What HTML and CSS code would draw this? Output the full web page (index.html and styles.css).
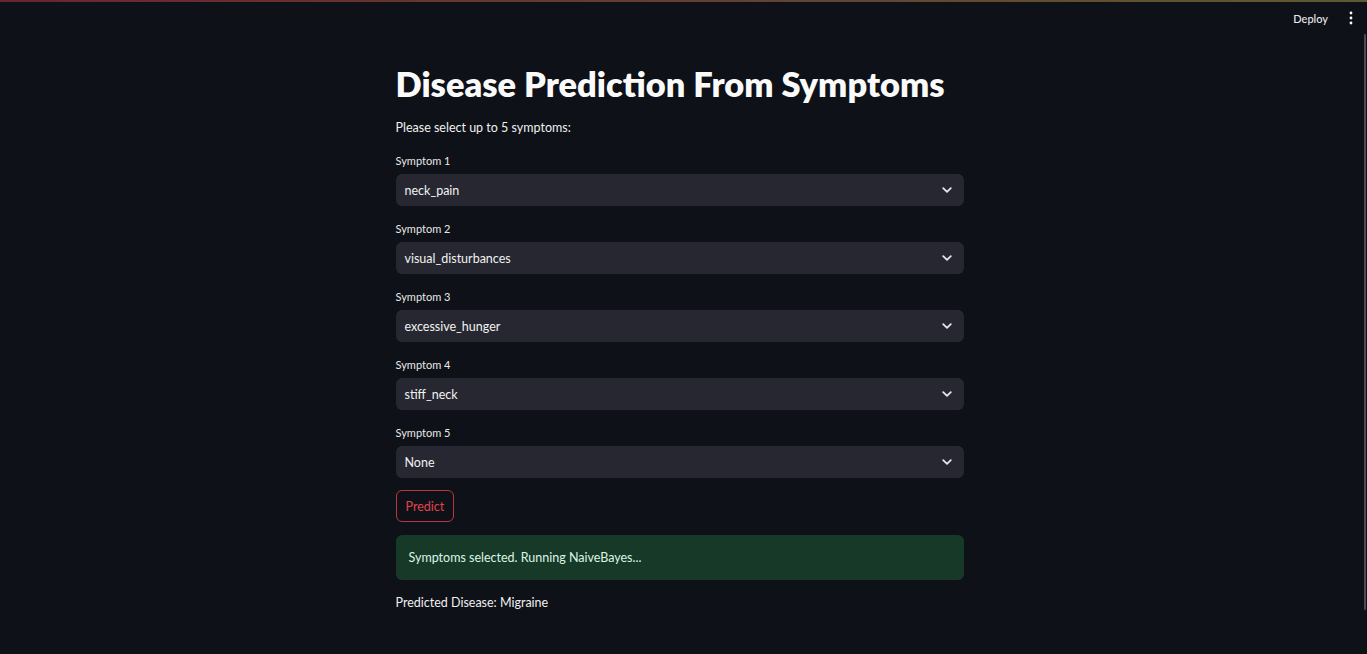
FILE: index.html
```html
<!DOCTYPE html>
<html lang="en">
<head>
<meta charset="utf-8">
<title>Disease Prediction From Symptoms</title>
<link rel="stylesheet" href="styles.css">
</head>
<body>
<div class="decoration"></div>
<header class="toolbar">
  <span class="deploy">Deploy</span>
  <span class="kebab" aria-label="menu">
    <svg width="4" height="14" viewBox="0 0 4 14"><circle cx="2" cy="2" r="1.4" fill="#fafafa"/><circle cx="2" cy="7" r="1.4" fill="#fafafa"/><circle cx="2" cy="12" r="1.4" fill="#fafafa"/></svg>
  </span>
</header>
<main class="app">
  <section class="block">
    <h1 class="title">Disease Prediction From Symptoms</h1>
    <p class="intro">Please select up to 5 symptoms:</p>

    <div class="field">
      <label class="label">Symptom 1</label>
      <div class="select"><span>neck_pain</span><svg class="chev" width="10" height="6" viewBox="0 0 10 6"><path d="M1.2 1.2 L5 4.8 L8.8 1.2" fill="none" stroke="#e6e6e6" stroke-width="1.8" stroke-linecap="round" stroke-linejoin="round"/></svg></div>
    </div>
    <div class="field">
      <label class="label">Symptom 2</label>
      <div class="select"><span>visual_disturbances</span><svg class="chev" width="10" height="6" viewBox="0 0 10 6"><path d="M1.2 1.2 L5 4.8 L8.8 1.2" fill="none" stroke="#e6e6e6" stroke-width="1.8" stroke-linecap="round" stroke-linejoin="round"/></svg></div>
    </div>
    <div class="field">
      <label class="label">Symptom 3</label>
      <div class="select"><span>excessive_hunger</span><svg class="chev" width="10" height="6" viewBox="0 0 10 6"><path d="M1.2 1.2 L5 4.8 L8.8 1.2" fill="none" stroke="#e6e6e6" stroke-width="1.8" stroke-linecap="round" stroke-linejoin="round"/></svg></div>
    </div>
    <div class="field">
      <label class="label">Symptom 4</label>
      <div class="select"><span>stiff_neck</span><svg class="chev" width="10" height="6" viewBox="0 0 10 6"><path d="M1.2 1.2 L5 4.8 L8.8 1.2" fill="none" stroke="#e6e6e6" stroke-width="1.8" stroke-linecap="round" stroke-linejoin="round"/></svg></div>
    </div>
    <div class="field">
      <label class="label">Symptom 5</label>
      <div class="select"><span>None</span><svg class="chev" width="10" height="6" viewBox="0 0 10 6"><path d="M1.2 1.2 L5 4.8 L8.8 1.2" fill="none" stroke="#e6e6e6" stroke-width="1.8" stroke-linecap="round" stroke-linejoin="round"/></svg></div>
    </div>

    <button class="btn" type="button">Predict</button>

    <div class="alert">Symptoms selected. Running NaiveBayes...</div>

    <p class="result">Predicted Disease: Migraine</p>
  </section>
</main>
<div class="scrollthumb"></div>
</body>
</html>
```
FILE: styles.css
```css
* { box-sizing: border-box; }
html, body { height: 100%; }
body {
  margin: 0;
  background: #0e1117;
  color: #fafafa;
  font-family: Lato, "Noto Sans", sans-serif;
  overflow: hidden;
}
.decoration {
  height: 2px;
  background: linear-gradient(90deg, #6a2530, #5e5a30);
}
.toolbar {
  display: flex;
  justify-content: flex-end;
  align-items: center;
  height: 32px;
  padding-right: 10px;
  gap: 17px;
}
.deploy {
  font-size: 11px;
  color: #e8e8e8;
  font-weight: 500;
}
.kebab { display: flex; align-items: center; width: 12px; justify-content: center; }
.app {
  display: flex;
  justify-content: center;
  padding-right: 8px;
}
.block {
  width: 568px;
  display: flex;
  flex-direction: column;
  padding-top: 29px;
}
.title {
  margin: 0;
  font-size: 34.4px;
  font-weight: 800;
  line-height: 42px;
  letter-spacing: 0;
  color: #fafafa;
}
.intro {
  margin: 15px 0 0;
  font-size: 12.5px;
  line-height: 16px;
  color: #f0f0f0;
}
.field {
  display: flex;
  flex-direction: column;
  margin-top: 18px;
}
.field + .field { margin-top: 16px; }
.label {
  font-size: 11px;
  line-height: 14px;
  color: #e8e8e8;
  margin-bottom: 6px;
}
.select {
  height: 32px;
  background: #262730;
  border-radius: 6px;
  display: flex;
  align-items: center;
  justify-content: space-between;
  padding: 0 12px 0 9px;
  font-size: 12.5px;
  color: #f2f2f2;
}
.chev { display: block; }
.btn {
  align-self: flex-start;
  margin-top: 12px;
  height: 32px;
  padding: 0 9px;
  background: #0e1117;
  border: 1px solid #b33a3d;
  border-radius: 6px;
  color: #e0454a;
  font-family: inherit;
  font-size: 12.5px;
}
.alert {
  margin-top: 13px;
  height: 45px;
  background: #173928;
  border-radius: 6px;
  display: flex;
  align-items: center;
  padding: 0 13px;
  font-size: 12.5px;
  color: #dcf5e4;
}
.result {
  margin: 15px 0 0;
  font-size: 12.5px;
  line-height: 16px;
  color: #f0f0f0;
}
.scrollthumb {
  position: fixed;
  right: 1px;
  top: 34px;
  width: 2px;
  height: 576px;
  background: #4a4c54;
  border-radius: 1px;
}
```
